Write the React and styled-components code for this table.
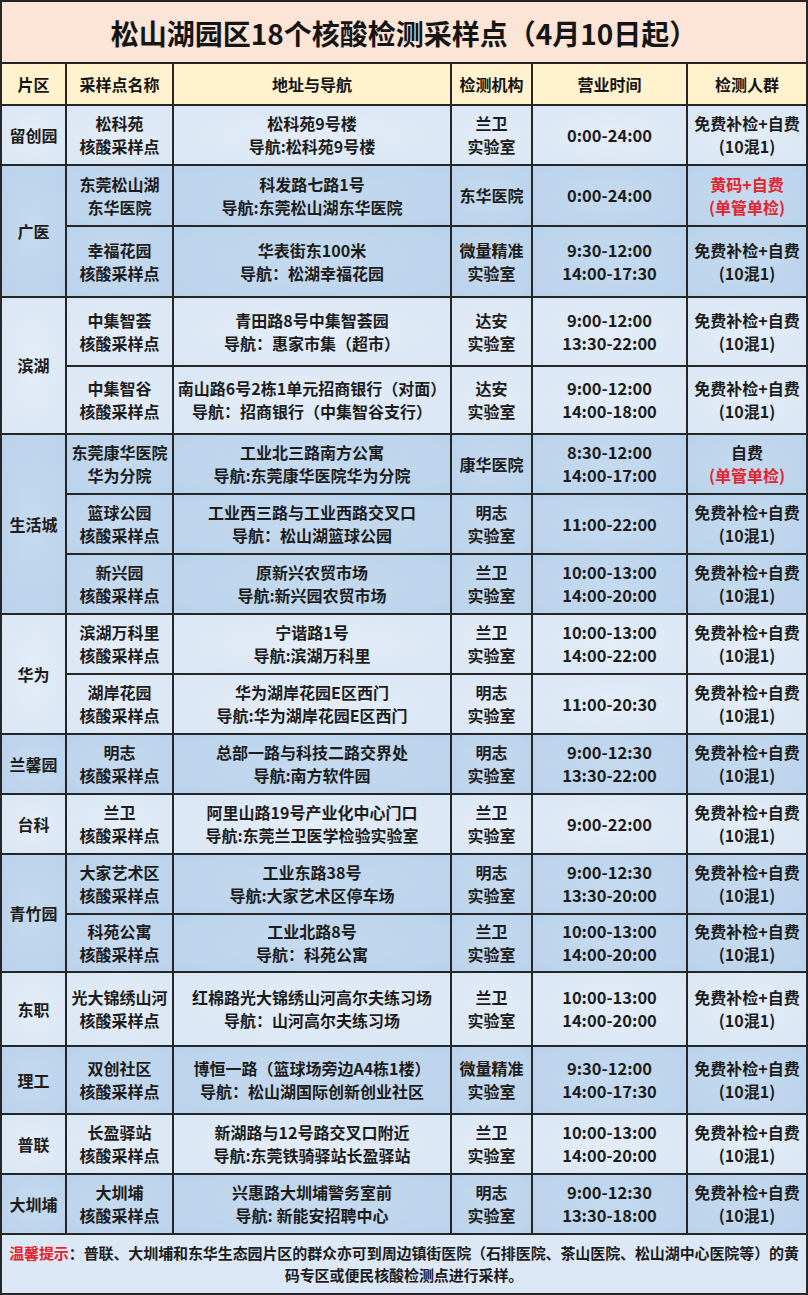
import React from 'react'
import styled, { createGlobalStyle, css } from 'styled-components'

const GlobalStyle = createGlobalStyle`
    html, body {
        margin: 0;
        padding: 0;
        background: #ffffff;
    }
    body {
        font-family: "Noto Sans CJK SC", "Noto Sans", sans-serif;
        color: #1c1c1c;
    }
`

const FREE = ['免费补检+自费', '(10混1)']

// each group is one 片区, each row inside is one 采样点
const groups = [
    {
        area: '留创园',
        rows: [
            { h: 58, name: ['松科苑', '核酸采样点'], addr: ['松科苑9号楼', '导航:松科苑9号楼'], lab: ['兰卫', '实验室'], time: ['0:00-24:00'], who: FREE },
        ],
    },
    {
        area: '广医',
        rows: [
            { h: 59, name: ['东莞松山湖', '东华医院'], addr: ['科发路七路1号', '导航:东莞松山湖东华医院'], lab: ['东华医院'], time: ['0:00-24:00'], who: ['黄码+自费', '(单管单检)'], red: [0, 1] },
            { h: 69, name: ['幸福花园', '核酸采样点'], addr: ['华表街东100米', '导航：松湖幸福花园'], lab: ['微量精准', '实验室'], time: ['9:30-12:00', '14:00-17:30'], who: FREE },
        ],
    },
    {
        area: '滨湖',
        rows: [
            { h: 67, name: ['中集智荟', '核酸采样点'], addr: ['青田路8号中集智荟园', '导航：惠家市集（超市）'], lab: ['达安', '实验室'], time: ['9:00-12:00', '13:30-22:00'], who: FREE },
            { h: 66, name: ['中集智谷', '核酸采样点'], addr: ['南山路6号2栋1单元招商银行（对面）', '导航：招商银行（中集智谷支行）'], lab: ['达安', '实验室'], time: ['9:00-12:00', '14:00-18:00'], who: FREE },
        ],
    },
    {
        area: '生活城',
        rows: [
            { h: 58, name: ['东莞康华医院', '华为分院'], addr: ['工业北三路南方公寓', '导航:东莞康华医院华为分院'], lab: ['康华医院'], time: ['8:30-12:00', '14:00-17:00'], who: ['自费', '(单管单检)'], red: [1] },
            { h: 58, name: ['篮球公园', '核酸采样点'], addr: ['工业西三路与工业西路交叉口', '导航：松山湖篮球公园'], lab: ['明志', '实验室'], time: ['11:00-22:00'], who: FREE },
            { h: 58, name: ['新兴园', '核酸采样点'], addr: ['原新兴农贸市场', '导航:新兴园农贸市场'], lab: ['兰卫', '实验室'], time: ['10:00-13:00', '14:00-20:00'], who: FREE },
        ],
    },
    {
        area: '华为',
        rows: [
            { h: 58, name: ['滨湖万科里', '核酸采样点'], addr: ['宁谐路1号', '导航:滨湖万科里'], lab: ['兰卫', '实验室'], time: ['10:00-13:00', '14:00-22:00'], who: FREE },
            { h: 58, name: ['湖岸花园', '核酸采样点'], addr: ['华为湖岸花园E区西门', '导航:华为湖岸花园E区西门'], lab: ['明志', '实验室'], time: ['11:00-20:30'], who: FREE },
        ],
    },
    {
        area: '兰馨园',
        rows: [
            { h: 58, name: ['明志', '核酸采样点'], addr: ['总部一路与科技二路交界处', '导航:南方软件园'], lab: ['明志', '实验室'], time: ['9:00-12:30', '13:30-22:00'], who: FREE },
        ],
    },
    {
        area: '台科',
        rows: [
            { h: 58, name: ['兰卫', '核酸采样点'], addr: ['阿里山路19号产业化中心门口', '导航:东莞兰卫医学检验实验室'], lab: ['兰卫', '实验室'], time: ['9:00-22:00'], who: FREE },
        ],
    },
    {
        area: '青竹园',
        rows: [
            { h: 58, name: ['大家艺术区', '核酸采样点'], addr: ['工业东路38号', '导航:大家艺术区停车场'], lab: ['明志', '实验室'], time: ['9:00-12:30', '13:30-20:00'], who: FREE },
            { h: 56, name: ['科苑公寓', '核酸采样点'], addr: ['工业北路8号', '导航：科苑公寓'], lab: ['兰卫', '实验室'], time: ['10:00-13:00', '14:00-20:00'], who: FREE },
        ],
    },
    {
        area: '东职',
        rows: [
            { h: 72, name: ['光大锦绣山河', '核酸采样点'], addr: ['红棉路光大锦绣山河高尔夫练习场', '导航：山河高尔夫练习场'], lab: ['兰卫', '实验室'], time: ['10:00-13:00', '14:00-20:00'], who: FREE },
        ],
    },
    {
        area: '理工',
        rows: [
            { h: 66, name: ['双创社区', '核酸采样点'], addr: ['博恒一路（篮球场旁边A4栋1楼）', '导航：松山湖国际创新创业社区'], lab: ['微量精准', '实验室'], time: ['9:30-12:00', '14:00-17:30'], who: FREE },
        ],
    },
    {
        area: '普联',
        rows: [
            { h: 58, name: ['长盈驿站', '核酸采样点'], addr: ['新湖路与12号路交叉口附近', '导航:东莞铁骑驿站长盈驿站'], lab: ['兰卫', '实验室'], time: ['10:00-13:00', '14:00-20:00'], who: FREE },
        ],
    },
    {
        area: '大圳埔',
        rows: [
            { h: 58, name: ['大圳埔', '核酸采样点'], addr: ['兴惠路大圳埔警务室前', '导航: 新能安招聘中心'], lab: ['明志', '实验室'], time: ['9:00-12:30', '13:30-18:00'], who: FREE },
        ],
    },
]

const headers = ['片区', '采样点名称', '地址与导航', '检测机构', '营业时间', '检测人群']

function Lines({ lines, red = [] }) {
    return lines.map((line, i) => (
        <Line key={i} $red={red.includes(i)}>{line}</Line>
    ))
}

function App() {
    const rowHeights = [60, 40]
    groups.forEach((g) => g.rows.forEach((r) => rowHeights.push(r.h)))
    rowHeights.push(58)

    return (
        <>
            <GlobalStyle />
            <Sheet $rows={rowHeights.map((h) => `${h}px`).join(' ')}>
                <Title>松山湖园区18个核酸检测采样点（4月10日起）</Title>
                {headers.map((h) => (
                    <HeadCell key={h}>{h}</HeadCell>
                ))}
                {groups.map((g, gi) => {
                    const tone = gi % 2 === 0 ? 'light' : 'dark'
                    return (
                        <React.Fragment key={g.area}>
                            <Cell $tone={tone} $span={g.rows.length}>{g.area}</Cell>
                            {g.rows.map((r, ri) => (
                                <React.Fragment key={ri}>
                                    <Cell $tone={tone}><Lines lines={r.name} /></Cell>
                                    <Cell $tone={tone}><Lines lines={r.addr} /></Cell>
                                    <Cell $tone={tone}><Lines lines={r.lab} /></Cell>
                                    <Cell $tone={tone} $time><Lines lines={r.time} /></Cell>
                                    <Cell $tone={tone}><Lines lines={r.who} red={r.red} /></Cell>
                                </React.Fragment>
                            ))}
                        </React.Fragment>
                    )
                })}
                <Note>
                    <Warn>温馨提示</Warn>：普联、大圳埔和东华生态园片区的群众亦可到周边镇街医院（石排医院、茶山医院、松山湖中心医院等）的黄
                    <br />
                    码专区或便民核酸检测点进行采样。
                </Note>
            </Sheet>
        </>
    )
}

const tones = {
    light: css`
        background: radial-gradient(ellipse at center, #e4edf8 0%, #d9e6f4 100%);
    `,
    dark: css`
        background: radial-gradient(ellipse at center, #c5daef 0%, #b9d2eb 100%);
    `,
}

const Sheet = styled.div`
    display: grid;
    grid-template-columns: 63px 105px 276px 79px 153px 118px;
    grid-template-rows: ${(p) => p.$rows};
    gap: 2px;
    padding: 2px;
    width: 808px;
    box-sizing: border-box;
    background: #262626;
`

const Title = styled.div`
    grid-column: 1 / -1;
    display: flex;
    align-items: center;
    justify-content: center;
    background: #fce4d6;
    font-size: 28px;
    font-weight: 700;
    color: #151515;
    padding-top: 2px;
`

const HeadCell = styled.div`
    display: flex;
    align-items: center;
    justify-content: center;
    background: #fff2cc;
    font-size: 16px;
    font-weight: 700;
    color: #151515;
`

const Cell = styled.div`
    display: flex;
    flex-direction: column;
    align-items: center;
    justify-content: center;
    text-align: center;
    white-space: nowrap;
    font-size: ${(p) => (p.$time ? '16.5px' : '16px')};
    font-weight: 700;
    line-height: 23px;
    ${(p) => tones[p.$tone]}
    ${(p) => p.$span > 1 && css`grid-row: span ${p.$span};`}
`

const Line = styled.span`
    display: block;
    color: ${(p) => (p.$red ? '#e5232b' : 'inherit')};
`

const Note = styled.div`
    grid-column: 1 / -1;
    padding: 7px 2px 0;
    box-sizing: border-box;
    background: #dce8f5;
    text-align: center;
    font-size: 15px;
    font-weight: 700;
    line-height: 22px;
    white-space: nowrap;
    letter-spacing: -0.1px;
`

const Warn = styled.span`
    color: #e5232b;
`

export default App
